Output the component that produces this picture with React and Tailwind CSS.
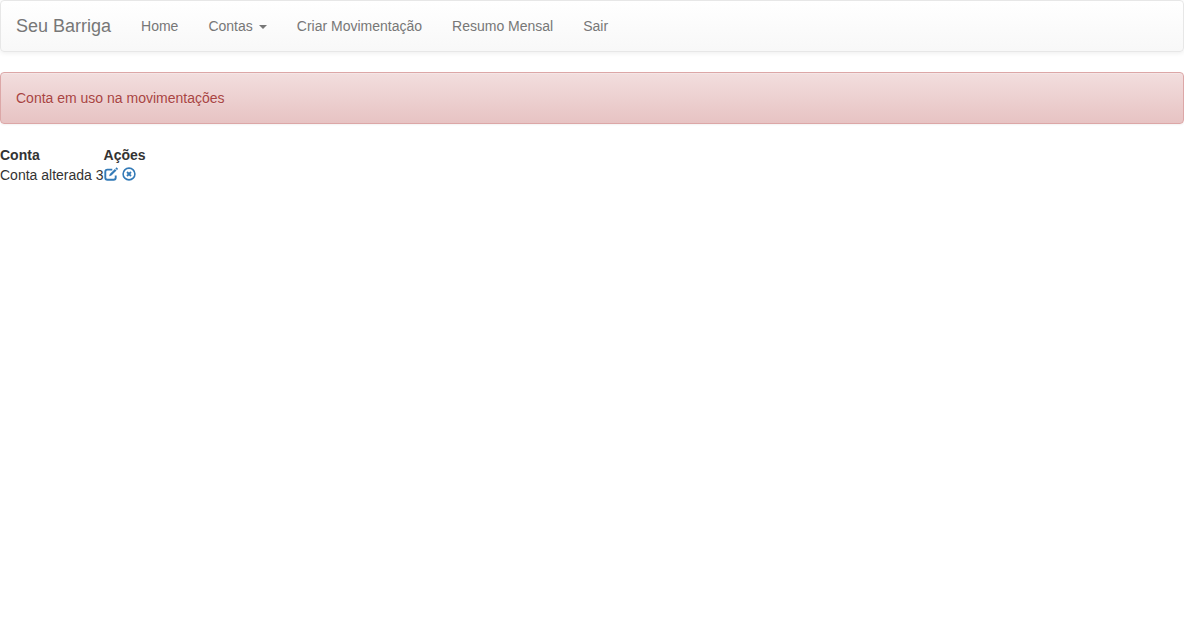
const links = [
  { label: 'Home', href: '#home' },
  { label: 'Contas', menu: true },
  { label: 'Criar Movimentação', href: '#movimentacao' },
  { label: 'Resumo Mensal', href: '#extrato' },
  { label: 'Sair', href: '#sair' },
];

const accounts = [{ id: 1, name: 'Conta alterada 3' }];

function EditIcon() {
  return (
    <svg className="size-3.5" viewBox="0 0 14 14" fill="none" aria-hidden="true">
      <path
        d="M8.3 2.6H3.4Q1.3 2.6 1.3 4.7v6Q1.3 12.8 3.4 12.8h6.2Q11.7 12.8 11.7 10.7V8.4"
        stroke="currentColor"
        strokeWidth="1.9"
      />
      <path d="M5.2 9.3l.6-2.3L10.9 1.9l1.6 1.6L7.4 8.6z" fill="currentColor" />
      <path d="M11.4 1.4l.8-.8q.3-.3.6 0l1 1q.3.3 0 .6l-.8.8z" fill="currentColor" />
    </svg>
  );
}

function RemoveCircleIcon() {
  return (
    <svg className="size-3.5" viewBox="0 0 14 14" fill="none" stroke="currentColor" aria-hidden="true">
      <circle cx="7" cy="7" r="5.9" strokeWidth="1.6" />
      <path d="M5 5l4 4M9 5l-4 4" strokeWidth="1.8" />
    </svg>
  );
}

function Navbar() {
  return (
    <nav className="mb-5 flex min-h-13 flex-wrap items-center rounded border border-[#e7e7e7] bg-linear-to-b from-white to-[#f8f8f8] text-[#777] shadow-[inset_0_1px_0_rgba(255,255,255,0.15),0_1px_5px_rgba(0,0,0,0.075)]">
      <a href="#inicio" className="p-[15px] text-lg leading-5 text-shadow-[0_1px_0_rgba(255,255,255,0.25)]">
        Seu Barriga
      </a>
      <ul className="flex flex-wrap text-shadow-[0_1px_0_rgba(255,255,255,0.25)]">
        {links.map((link) => (
          <li key={link.label}>
            {link.menu ? (
              <button type="button" aria-haspopup="menu" className="flex cursor-pointer items-center gap-1.5 p-[15px]">
                {link.label}
                <span className="mt-0.5 border-x-4 border-t-4 border-x-transparent border-t-[#777]" />
              </button>
            ) : (
              <a href={link.href} className="block p-[15px]">
                {link.label}
              </a>
            )}
          </li>
        ))}
      </ul>
    </nav>
  );
}

export default function App() {
  return (
    <div className="font-['Liberation_Sans',Arial,sans-serif] text-[14px] leading-5 text-[#333]">
      <Navbar />
      <div
        role="alert"
        className="mb-[21px] rounded border border-[#dca7a7] bg-linear-to-b from-[#f2dede] to-[#e7c3c3] p-[15px] text-[#a94442] shadow-[inset_0_1px_0_rgba(255,255,255,0.25),0_1px_2px_rgba(0,0,0,0.05)] text-shadow-[0_1px_0_rgba(255,255,255,0.2)]"
      >
        Conta em uso na movimentações
      </div>
      <table>
        <thead>
          <tr className="text-left">
            <th className="p-0">Conta</th>
            <th className="p-0">Ações</th>
          </tr>
        </thead>
        <tbody>
          {accounts.map((account) => (
            <tr key={account.id}>
              <td className="p-0">{account.name}</td>
              <td className="p-0 pt-0.5 align-top">
                <div className="flex gap-1 text-[#337ab7]">
                  <a href="#editar" className="block h-3.5" aria-label={`Editar ${account.name}`}>
                    <EditIcon />
                  </a>
                  <a href="#remover" className="block h-3.5" aria-label={`Remover ${account.name}`}>
                    <RemoveCircleIcon />
                  </a>
                </div>
              </td>
            </tr>
          ))}
        </tbody>
      </table>
    </div>
  );
}
